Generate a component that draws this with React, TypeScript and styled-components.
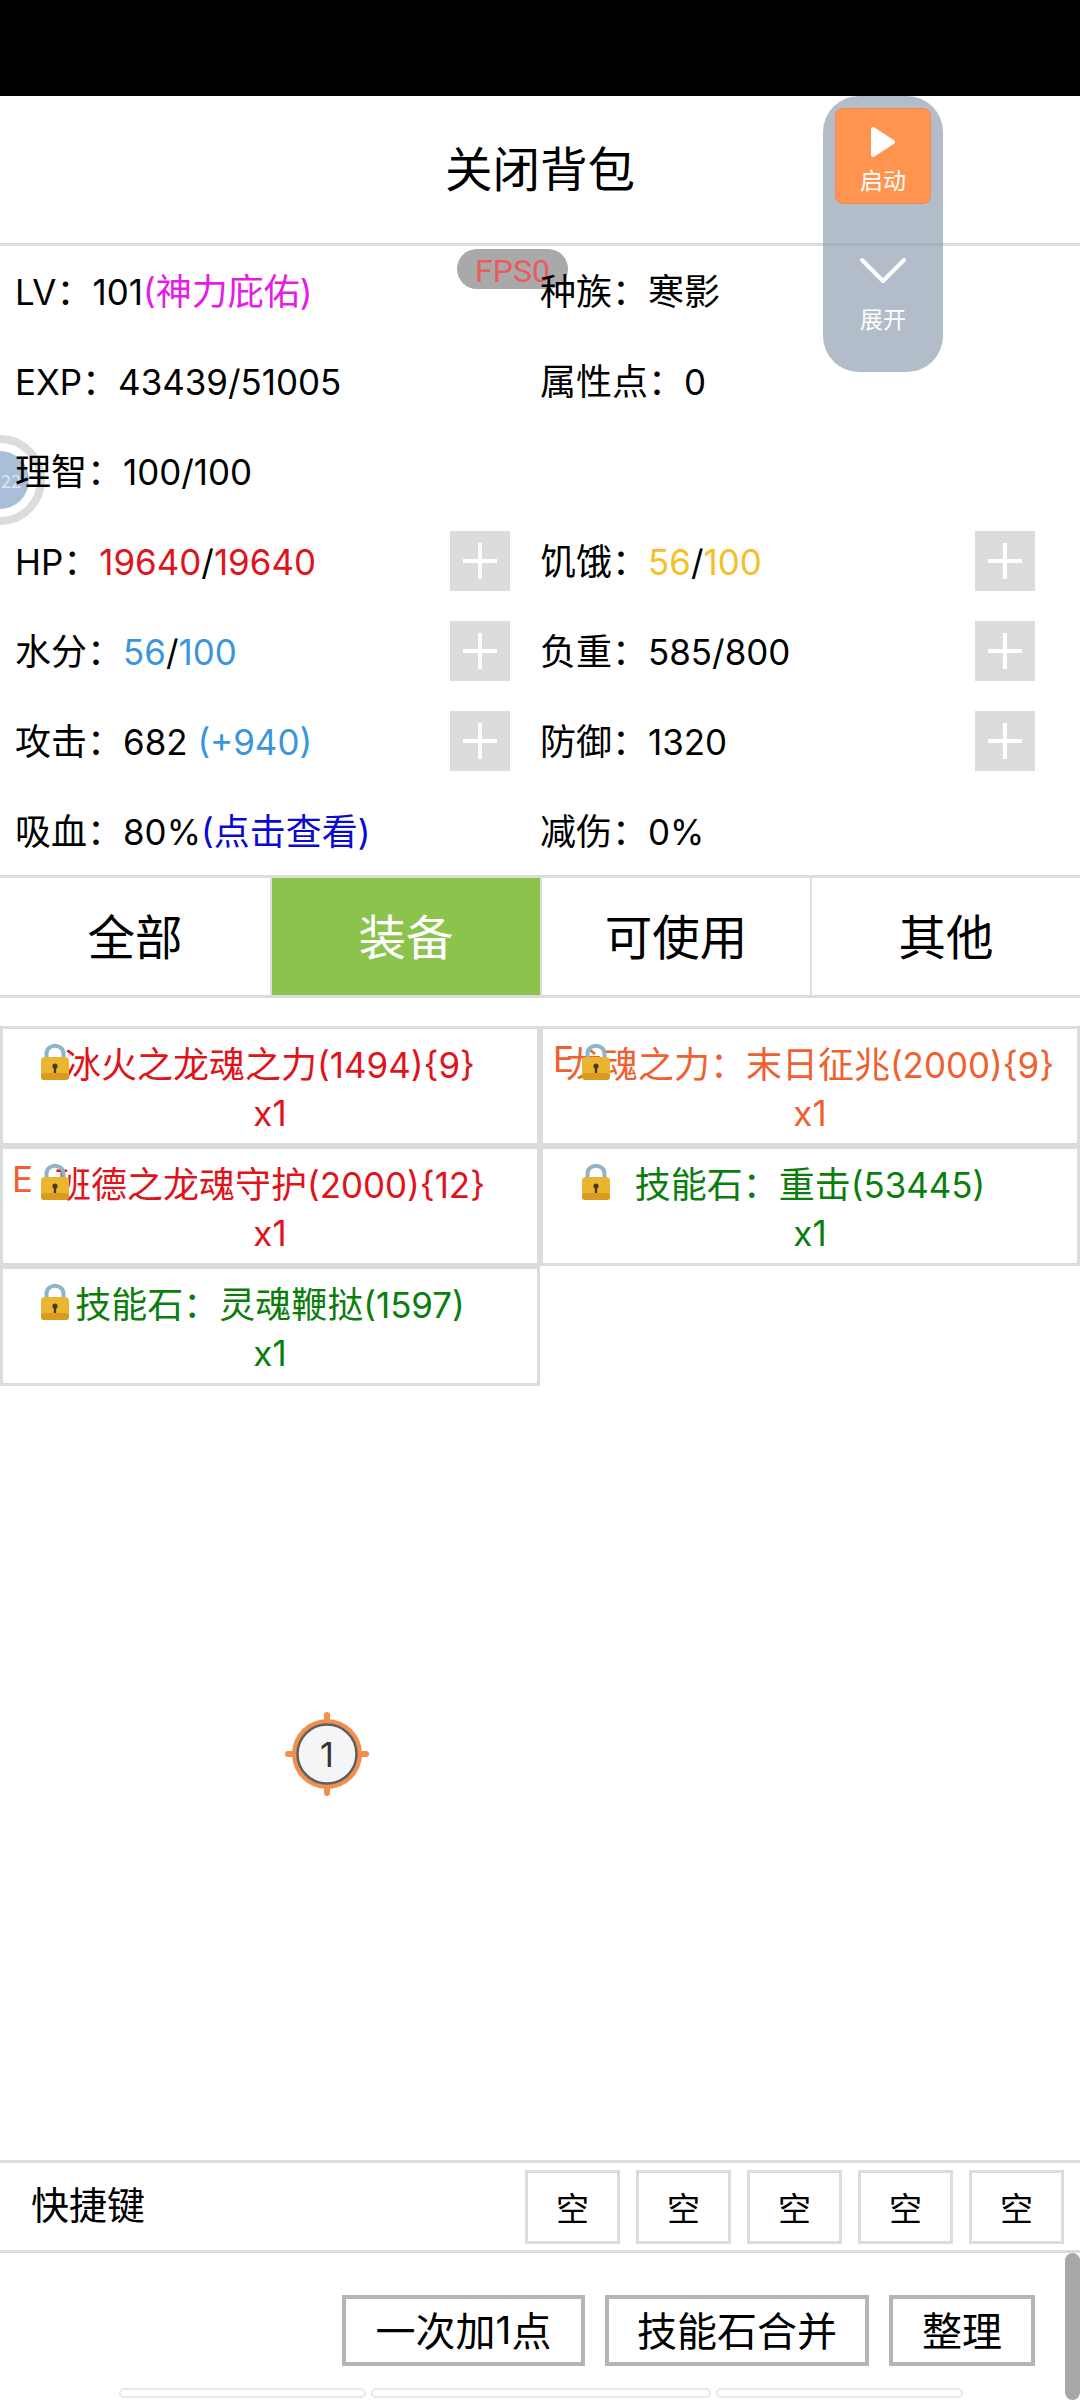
import styled, { createGlobalStyle } from "styled-components";

const GlobalStyle = createGlobalStyle`
  html, body {
    margin: 0;
    padding: 0;
    background: #fff;
  }
  * {
    box-sizing: border-box;
  }
`;

interface Segment {
  text: string;
  color?: string;
}

interface Stat {
  label: string;
  value: Segment[];
  plus?: boolean;
}

interface Item {
  name: string;
  color: string;
  equipped?: boolean;
  lockLeft: number;
  eLeft?: number;
}

const RED = "#e0131a";
const BLUE = "#3a96dc";
const YELLOW = "#f5bf27";
const GREEN = "#0b7d0b";

const stats: Stat[] = [
  { label: "LV：", value: [{ text: "101" }, { text: "(神力庇佑)", color: "#e61be6" }] },
  { label: "种族：", value: [{ text: "寒影" }] },
  { label: "EXP：", value: [{ text: "43439/51005" }] },
  { label: "属性点：", value: [{ text: "0" }] },
  { label: "理智：", value: [{ text: "100/100" }] },
  { label: "", value: [] },
  { label: "HP：", value: [{ text: "19640", color: RED }, { text: "/" }, { text: "19640", color: RED }], plus: true },
  { label: "饥饿：", value: [{ text: "56", color: YELLOW }, { text: "/" }, { text: "100", color: YELLOW }], plus: true },
  { label: "水分：", value: [{ text: "56", color: BLUE }, { text: "/" }, { text: "100", color: BLUE }], plus: true },
  { label: "负重：", value: [{ text: "585/800" }], plus: true },
  { label: "攻击：", value: [{ text: "682 " }, { text: "(+940)", color: BLUE }], plus: true },
  { label: "防御：", value: [{ text: "1320" }], plus: true },
  { label: "吸血：", value: [{ text: "80%" }, { text: "(点击查看)", color: "#0a0ad2" }] },
  { label: "减伤：", value: [{ text: "0%" }] },
];

const items: Item[] = [
  { name: "冰火之龙魂之力(1494){9}", color: RED, lockLeft: 38 },
  { name: "龙魂之力：末日征兆(2000){9}", color: "#f0602e", lockLeft: 39, equipped: true, eLeft: 10 },
  { name: "班德之龙魂守护(2000){12}", color: RED, lockLeft: 38, equipped: true, eLeft: 9 },
  { name: "技能石：重击(53445)", color: GREEN, lockLeft: 39 },
  { name: "技能石：灵魂鞭挞(1597)", color: GREEN, lockLeft: 38 },
];

const tabs = ["全部", "装备", "可使用", "其他"];

// latin runs get their own font and size, the CJK font stays at full size
const Mixed: React.FC<{ text: string }> = ({ text }) => (
  <>
    {text.split(/([\x00-\x7F]+)/).map((part, index) =>
      index % 2 === 1 ? <Latin key={index}>{part}</Latin> : part
    )}
  </>
);

const LockIcon: React.FC<{ $left: number }> = ({ $left }) => (
  <LockBox $left={$left}>
    <svg width="28" height="38" viewBox="0 0 28 38">
      <path d="M5.5 18V12C5.5 1 22.5 1 22.5 12V18" fill="none" stroke="#8fb3c9" strokeWidth="4" />
      <rect x="0" y="15" width="28" height="23" rx="4" fill="#eab62f" />
      <rect x="0" y="31" width="28" height="7" rx="3.5" fill="#d99a22" />
      <circle cx="14" cy="24" r="2.6" fill="#4a3a1c" />
      <rect x="12.8" y="24.5" width="2.4" height="6.5" fill="#4a3a1c" />
    </svg>
  </LockBox>
);

const App: React.FC = () => {
  return (
    <Page>
      <GlobalStyle />
      <StatusBar />
      <Title>
        <TitleText>关闭背包</TitleText>
      </Title>
      <StatGrid>
        {stats.map((stat, index) => (
          <StatRow key={index} $right={index % 2 === 1}>
            <StatText>
              <Mixed text={stat.label} />
              {stat.value.map((seg, i) => (
                <Tone key={i} $color={seg.color}>
                  <Mixed text={seg.text} />
                </Tone>
              ))}
            </StatText>
            {stat.plus && (
              <PlusButton>
                <svg width="34" height="36" viewBox="0 0 34 36">
                  <path d="M0 18H34M17 0V36" stroke="#fff" strokeWidth="4" />
                </svg>
              </PlusButton>
            )}
          </StatRow>
        ))}
      </StatGrid>
      <TabBar>
        {tabs.map((tab, index) => (
          <Tab key={tab} $active={index === 1}>
            {tab}
          </Tab>
        ))}
      </TabBar>
      <ItemGrid>
        {items.map((item) => (
          <ItemCell key={item.name} $color={item.color}>
            {item.equipped && <EquipMark $left={item.eLeft}>E</EquipMark>}
            <LockIcon $left={item.lockLeft} />
            <div>
              <Mixed text={item.name} />
            </div>
            <div>
              <Latin>x1</Latin>
            </div>
          </ItemCell>
        ))}
      </ItemGrid>
      <Spacer />
      <ShortcutBar>
        <ShortcutLabel>快捷键</ShortcutLabel>
        <Slots>
          {[0, 1, 2, 3, 4].map((slot) => (
            <Slot key={slot}>空</Slot>
          ))}
        </Slots>
      </ShortcutBar>
      <Actions>
        <ActionButton $width={243}>
          <Mixed text="一次加1点" />
        </ActionButton>
        <ActionButton $width={264}>技能石合并</ActionButton>
        <ActionButton $width={146}>整理</ActionButton>
      </Actions>
      <BottomPills>
        <Pill $width={247} />
        <Pill $width={340} />
        <Pill $width={247} />
      </BottomPills>

      <ScrollThumb />
      <FpsPill>FPS0</FpsPill>
      <FloatPanel>
        <StartButton>
          <svg width="26" height="32" viewBox="0 0 26 32">
            <path d="M3 3L23 16L3 29Z" fill="#fff" stroke="#fff" strokeWidth="4" strokeLinejoin="round" />
          </svg>
          <PanelText>启动</PanelText>
        </StartButton>
        <ExpandButton>
          <svg width="48" height="28" viewBox="0 0 48 28">
            <path d="M3 3L24 24L45 3" fill="none" stroke="#fff" strokeWidth="4" strokeLinecap="round" strokeLinejoin="round" />
          </svg>
          <PanelText>展开</PanelText>
        </ExpandButton>
      </FloatPanel>
      <SideBall>
        <SideBallInner>22</SideBallInner>
      </SideBall>
      <Marker>
        <svg width="84" height="84" viewBox="0 0 84 84">
          <path d="M42 3V14M42 70V81M3 42H14M70 42H81" stroke="#f28f4e" strokeWidth="6" strokeLinecap="round" />
          <circle cx="42" cy="42" r="35" fill="#f28f4e" />
          <circle cx="42" cy="42" r="29.5" fill="#f4f5f7" stroke="#5f5f5f" strokeWidth="2.5" />
        </svg>
        <MarkerText>1</MarkerText>
      </Marker>
    </Page>
  );
};

export default App;

const Latin = styled.span`
  font-family: Inter, "Liberation Sans", sans-serif;
  font-size: 0.97em;
`;

const Tone = styled.span<{ $color?: string }>`
  color: ${(p) => p.$color || "inherit"};
  white-space: pre;
`;

const Page = styled.div`
  position: relative;
  width: 1080px;
  height: 2400px;
  display: flex;
  flex-direction: column;
  overflow: hidden;
  background: #fff;
  color: #000;
  font-family: "Noto Sans CJK SC", sans-serif;
  font-size: 36px;
`;

const StatusBar = styled.div`
  height: 96px;
  background: #000;
  flex: none;
`;

const Title = styled.div`
  height: 150px;
  flex: none;
  display: flex;
  align-items: center;
  justify-content: center;
  font-size: 47.5px;
  border-bottom: 3px solid #dcdcdc;
`;

const TitleText = styled.div`
  padding-bottom: 7px;
`;

const StatGrid = styled.div`
  position: relative;
  z-index: 1;
  display: grid;
  grid-template-columns: 540px 540px;
  grid-auto-rows: 90px;
  flex: none;
  height: 629px;
`;

const StatRow = styled.div<{ $right?: boolean }>`
  display: flex;
  align-items: center;
  justify-content: space-between;
  padding: ${(p) => (p.$right ? "0 45px 0 0" : "0 30px 0 15px")};
`;

const StatText = styled.span`
  padding-bottom: 5px;
`;

const PlusButton = styled.div`
  width: 60px;
  height: 60px;
  background: #dcdcdc;
  display: flex;
  align-items: center;
  justify-content: center;
`;

const TabBar = styled.div`
  display: grid;
  grid-template-columns: repeat(4, 270px);
  height: 123px;
  flex: none;
  border-top: 3px solid #dcdcdc;
  border-bottom: 3px solid #dcdcdc;
`;

const Tab = styled.div<{ $active?: boolean }>`
  display: flex;
  align-items: center;
  justify-content: center;
  font-size: 47.5px;
  padding-bottom: 4px;
  border-left: 2px solid #dcdcdc;
  background: ${(p) => (p.$active ? "#8cc34d" : "#fff")};
  color: ${(p) => (p.$active ? "#fff" : "#000")};

  &:first-child {
    border-left: none;
  }
`;

const ItemGrid = styled.div`
  display: grid;
  grid-template-columns: 540px 540px;
  grid-auto-rows: 120px;
  margin-top: 28px;
  flex: none;
`;

const ItemCell = styled.div<{ $color: string }>`
  position: relative;
  border: 3px solid #dcdcdc;
  display: flex;
  flex-direction: column;
  align-items: center;
  justify-content: center;
  line-height: 45px;
  white-space: nowrap;
  padding-top: 4px;
  color: ${(p) => p.$color};
`;

const EquipMark = styled.span<{ $left?: number }>`
  position: absolute;
  left: ${(p) => p.$left}px;
  top: 8px;
  color: #f0602e;
  font-family: Inter, sans-serif;
  font-size: 35px;
`;

const LockBox = styled.div<{ $left: number }>`
  position: absolute;
  left: ${(p) => p.$left}px;
  top: 13px;
  height: 38px;

  svg {
    display: block;
  }
`;

const Spacer = styled.div`
  flex: 1;
`;

const ShortcutBar = styled.div`
  height: 93px;
  flex: none;
  display: flex;
  align-items: center;
  justify-content: space-between;
  padding: 0 16px 0 31px;
  border-top: 3px solid #dcdcdc;
  border-bottom: 3px solid #dcdcdc;
`;

const ShortcutLabel = styled.div`
  font-size: 38px;
  margin-top: -8px;
`;

const Slots = styled.div`
  display: flex;
  gap: 16px;
`;

const Slot = styled.div`
  width: 95px;
  height: 74px;
  border: 3px solid #dcdcdc;
  display: flex;
  align-items: center;
  justify-content: center;
  font-size: 33px;
`;

const Actions = styled.div`
  height: 113px;
  flex: none;
  display: flex;
  justify-content: flex-end;
  align-items: flex-end;
  gap: 20px;
  padding: 0 45px 0 0;
`;

const ActionButton = styled.div<{ $width: number }>`
  width: ${(p) => p.$width}px;
  height: 71px;
  border: 4px solid #b5b5b5;
  display: flex;
  align-items: center;
  justify-content: center;
  font-size: 40px;
  padding-bottom: 3px;
`;

const BottomPills = styled.div`
  display: flex;
  gap: 5px;
  padding-left: 119px;
  margin-top: 22px;
  margin-bottom: 2px;
  flex: none;
`;

const Pill = styled.div<{ $width: number }>`
  width: ${(p) => p.$width}px;
  height: 10px;
  border: 2px solid #e8e8e8;
  border-radius: 6px;
`;

const ScrollThumb = styled.div`
  position: absolute;
  right: 0;
  top: 2253px;
  bottom: 0;
  width: 15px;
  border-radius: 8px;
  background: #a8a8a8;
`;

const FpsPill = styled.div`
  position: absolute;
  left: 457px;
  top: 249px;
  width: 111px;
  height: 40px;
  border-radius: 20px;
  background: #a9a9a9;
  color: #e95b60;
  font-family: Roboto, sans-serif;
  font-size: 32px;
  line-height: 44px;
  text-align: center;
`;

const FloatPanel = styled.div`
  position: absolute;
  z-index: 2;
  left: 823px;
  top: 96px;
  width: 120px;
  height: 276px;
  border-radius: 36px;
  background: rgba(150, 163, 180, 0.72);
  padding-top: 12px;
  display: flex;
  flex-direction: column;
  align-items: center;
`;

const StartButton = styled.div`
  width: 96px;
  height: 96px;
  border-radius: 8px;
  background: #ff9350;
  border: 1px solid #ec8a52;
  display: flex;
  flex-direction: column;
  align-items: center;
  padding-top: 17px;
  gap: 5px;
`;

const ExpandButton = styled.div`
  display: flex;
  flex-direction: column;
  align-items: center;
  margin-top: 53px;
  gap: 17px;
`;

const PanelText = styled.div`
  color: #fff;
  font-size: 23px;
  line-height: 32px;
`;

const SideBall = styled.div`
  position: absolute;
  left: -45px;
  top: 435px;
  width: 90px;
  height: 90px;
  border-radius: 50%;
  border: 8px solid #dcdcdc;
  background: #fff;
  display: flex;
  align-items: center;
  justify-content: center;
`;

const SideBallInner = styled.div`
  width: 58px;
  height: 58px;
  border-radius: 50%;
  background: #a9bfd9;
  color: #dfe6ee;
  font-size: 18px;
  display: flex;
  align-items: center;
  justify-content: flex-end;
  padding-right: 8px;
`;

const Marker = styled.div`
  position: absolute;
  left: 285px;
  top: 1712px;
  width: 84px;
  height: 84px;
  display: flex;
  align-items: center;
  justify-content: center;

  svg {
    position: absolute;
    left: 0;
    top: 0;
  }
`;

const MarkerText = styled.span`
  position: relative;
  color: #333;
  font-family: Inter, sans-serif;
  font-size: 34px;
`;
